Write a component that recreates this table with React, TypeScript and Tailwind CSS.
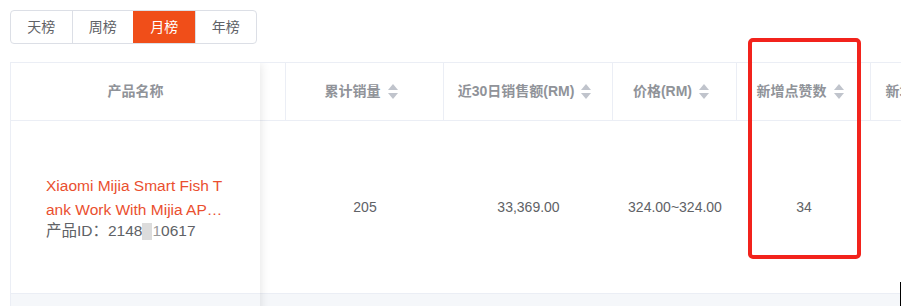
import React from "react";

function Caret() {
  return (
    <span className="relative inline-block w-[24px] h-[16px] shrink-0">
      <span className="absolute left-[7px] top-0 w-0 h-0 border-l-[5px] border-r-[5px] border-b-[6px] border-l-transparent border-r-transparent border-b-[#c0c4cc]" />
      <span className="absolute left-[7px] top-[9px] w-0 h-0 border-l-[5px] border-r-[5px] border-t-[6px] border-l-transparent border-r-transparent border-t-[#c0c4cc]" />
    </span>
  );
}

const cols = [
  { w: "w-[158px]", title: "累计销量", value: "205" },
  { w: "w-[169px]", title: "近30日销售额(RM)", value: "33,369.00" },
  { w: "w-[124px]", title: "价格(RM)", value: "324.00~324.00" },
  { w: "w-[134px]", title: "新增点赞数", value: "34" },
  { w: "w-[124px]", title: "新增评论数", value: "12" },
];

export default function App() {
  const tabs = ["天榜", "周榜", "月榜", "年榜"];
  return (
    <div className="relative w-[914px] h-[306px] bg-white overflow-hidden font-['Liberation_Sans','Noto_Sans_CJK_SC',sans-serif]">
      <div className="ml-[10px] mt-[10px] flex h-[34px] w-[247px] border border-[#dcdfe6] rounded-[4px] overflow-hidden">
        {tabs.map((t, i) => (
          <div
            key={t}
            className={
              "flex-1 flex items-center justify-center text-[14px] " +
              (i > 0 ? "border-l border-[#dcdfe6] " : "") +
              (i === 2 ? "bg-[#f04e19] text-white border-[#f04e19]" : "text-[#606266]")
            }
          >
            {t}
          </div>
        ))}
      </div>

      <div className="ml-[10px] mt-[18px] w-[891px] h-[300px] overflow-hidden border-l border-t border-[#ebeef5] flex">
        {/* fixed column */}
        <div className="relative z-10 w-[249px] shrink-0 bg-white shadow-[0_0_10px_rgba(0,0,0,0.12)] flex flex-col">
          <div className="h-[58px] border-b border-[#ebeef5] flex items-center justify-center text-[14px] font-bold text-[#909399]">
            产品名称
          </div>
          <div className="h-[173px] border-b border-[#ebeef5] flex items-center pl-[35px]">
            <div>
              <div className="text-[15.5px] leading-[24px] text-[#ea4f2f] whitespace-nowrap">
                <div>Xiaomi Mijia Smart Fish T</div>
                <div>ank Work With Mijia AP…</div>
              </div>
              <div className="text-[15.5px] leading-[18px] text-[#606266] whitespace-nowrap flex items-center">
                <span>产品ID：2148</span>
                <span className="inline-block w-[10px] h-[17px] bg-[#dcdcdc]" />
                <span className="text-[#9a9a9a]">1</span>
                <span>0617</span>
              </div>
            </div>
          </div>
          <div className="flex-1 bg-[#f5f7fa]" />
        </div>

        {/* scrolling columns */}
        <div className="flex flex-col">
          <div className="flex h-[58px] border-b border-[#ebeef5]">
            <div className="w-[26px] shrink-0 border-r border-[#ebeef5]" />
            {cols.map((c) => (
              <div
                key={c.title}
                className={c.w + " shrink-0 border-r border-[#ebeef5] flex items-center justify-center text-[14px] font-bold text-[#909399] whitespace-nowrap"}
              >
                <span>{c.title}</span>
                <Caret />
              </div>
            ))}
          </div>
          <div className="flex h-[173px] border-b border-[#ebeef5]">
            <div className="w-[26px] shrink-0" />
            {cols.map((c) => (
              <div
                key={c.title}
                className={c.w + " shrink-0 flex items-center justify-center text-[14px] text-[#606266] whitespace-nowrap"}
              >
                {c.title === "新增评论数" ? "" : c.value}
              </div>
            ))}
          </div>
          <div className="flex-1 bg-[#f5f7fa]" />
        </div>
      </div>

      <div className="absolute left-[748px] top-[38px] w-[113px] h-[221px] border-4 border-[#f2231c] rounded-[5px]" />
      <div className="absolute left-[900px] top-[282px] w-px h-[24px] bg-black" />
    </div>
  );
}
